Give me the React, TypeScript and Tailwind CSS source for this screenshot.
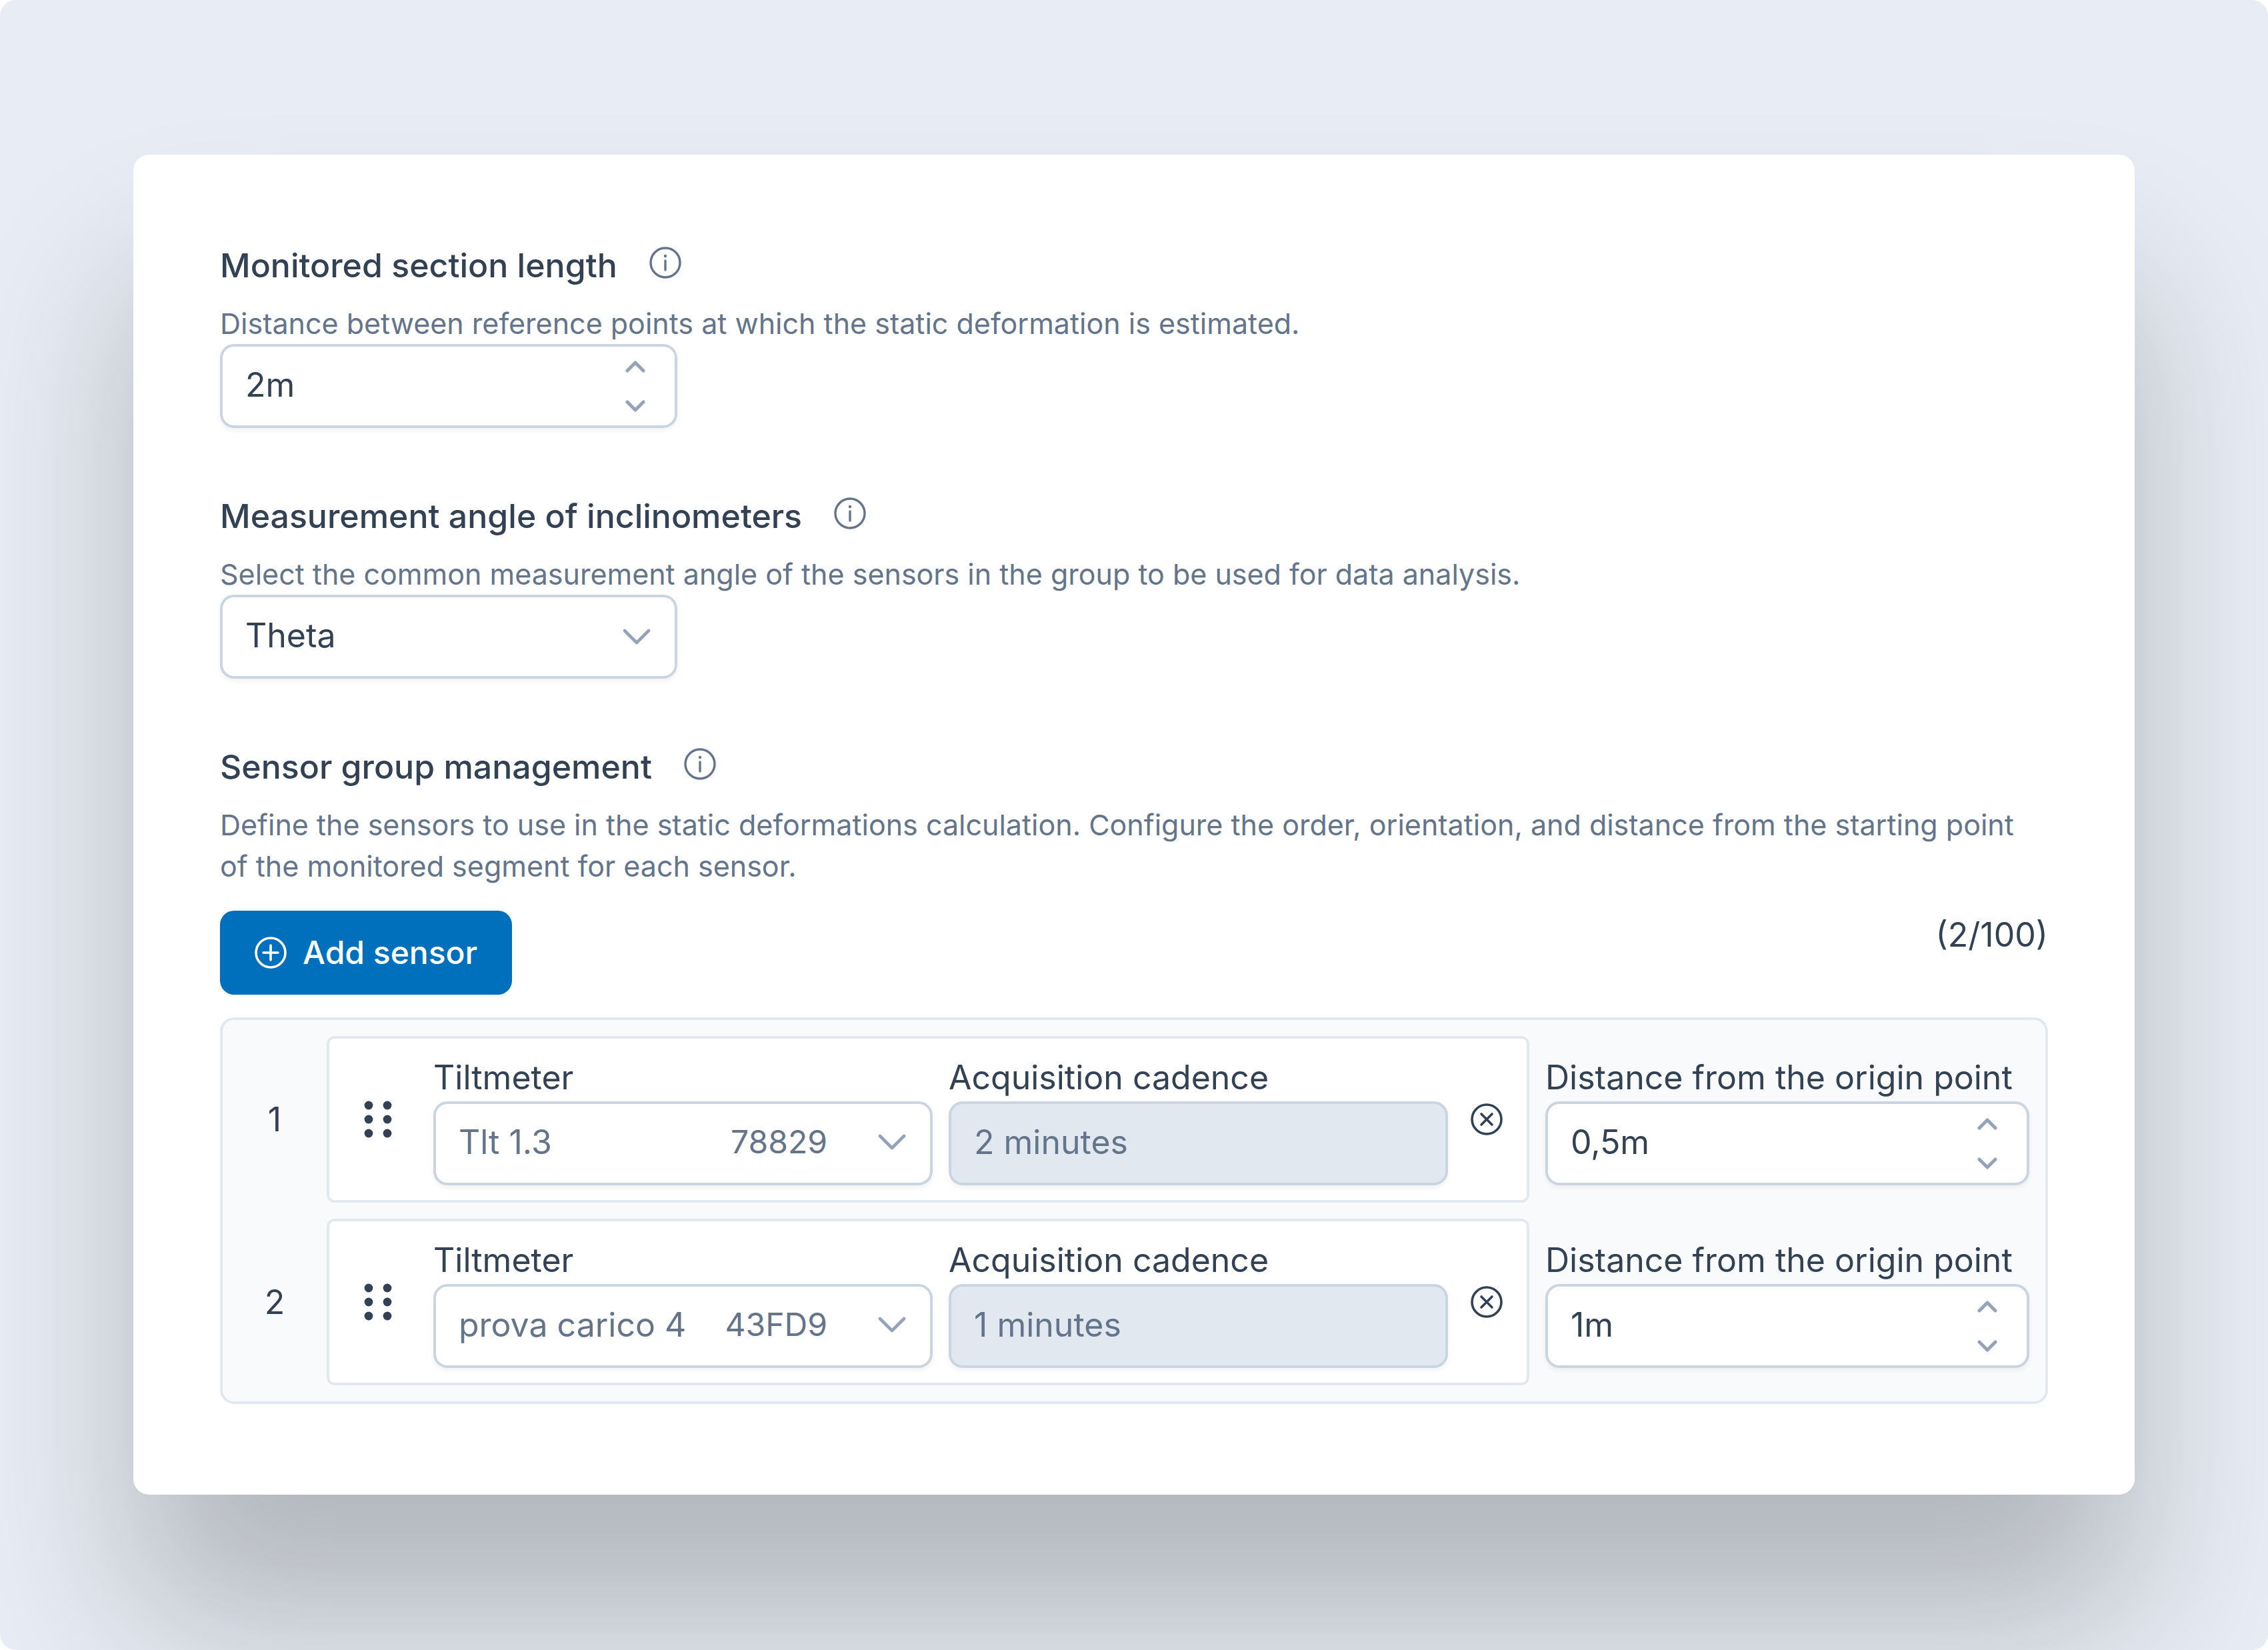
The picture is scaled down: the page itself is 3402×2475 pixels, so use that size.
import { useId, useState, type ReactNode } from "react";

type Sensor = {
  id: number;
  name: string;
  code: string;
  cadence: string;
  distance: string;
};

const SENSORS: Sensor[] = [
  { id: 1, name: "Tlt 1.3", code: "78829", cadence: "2 minutes", distance: "0,5m" },
  { id: 2, name: "prova carico 4", code: "43FD9", cadence: "1 minutes", distance: "1m" },
];

const MAX_SENSORS = 100;

const fieldClass =
  "h-[126px] w-full appearance-none rounded-[21px] border-4 border-[#cbd5e1] px-[34px] pb-1 shadow-[0_4px_7px_rgba(18,18,23,0.05)] outline-none";

const InfoIcon = () => (
  <svg viewBox="0 0 48 48" className="size-12" fill="none" stroke="currentColor" aria-hidden="true">
    <circle cx="24" cy="24" r="22" strokeWidth="3.4" />
    <path d="M24 21v14" strokeWidth="3.4" strokeLinecap="round" />
    <circle cx="24" cy="14" r="2.2" fill="currentColor" stroke="none" />
  </svg>
);

const PlusCircleIcon = () => (
  <svg
    viewBox="0 0 48 48"
    className="size-12"
    fill="none"
    stroke="currentColor"
    strokeWidth="3.6"
    strokeLinecap="round"
    aria-hidden="true"
  >
    <circle cx="24" cy="24" r="22" />
    <path d="M24 13v22M13 24h22" />
  </svg>
);

const CloseCircleIcon = () => (
  <svg
    viewBox="0 0 48 48"
    className="size-12"
    fill="none"
    stroke="currentColor"
    strokeWidth="3.6"
    strokeLinecap="round"
    aria-hidden="true"
  >
    <circle cx="24" cy="24" r="22" />
    <path d="M16 16l16 16M32 16l-16 16" />
  </svg>
);

const DotsIcon = () => (
  <svg viewBox="0 0 42 56" className="h-14 w-[42px]" fill="currentColor" aria-hidden="true">
    {[7, 28, 49].map((y) => (
      <g key={y}>
        <circle cx="7" cy={y} r="6.4" />
        <circle cx="35" cy={y} r="6.4" />
      </g>
    ))}
  </svg>
);

const ChevronDown = () => (
  <svg
    viewBox="0 0 42 24"
    className="h-6 w-[42px] text-[#94a3b8]"
    fill="none"
    stroke="currentColor"
    strokeWidth="4.6"
    strokeLinecap="round"
    strokeLinejoin="round"
    aria-hidden="true"
  >
    <path d="M3 3l18 18L39 3" />
  </svg>
);

const StepIcon = ({ d }: { d: string }) => (
  <svg
    viewBox="0 0 30 18"
    className="h-[18px] w-[30px]"
    fill="none"
    stroke="currentColor"
    strokeWidth="5"
    strokeLinecap="round"
    strokeLinejoin="round"
    aria-hidden="true"
  >
    <path d={d} />
  </svg>
);

const NumberField = ({ id, value }: { id: string; value: string }) => {
  const [text, setText] = useState(value);

  const step = (delta: number) => {
    const next = Math.max(0, parseFloat(text.replace(",", ".")) + delta);
    setText(`${String(next).replace(".", ",")}m`);
  };

  return (
    <div className="relative">
      <input
        id={id}
        type="text"
        inputMode="decimal"
        value={text}
        onChange={(e) => setText(e.target.value)}
        className={`${fieldClass} bg-white text-[#334155]`}
      />
      <div className="absolute inset-y-0 right-[34px] flex w-[58px] flex-col py-1 text-[#94a3b8]">
        <button
          type="button"
          aria-label="Increase"
          onClick={() => step(0.5)}
          className="flex flex-1 items-center justify-center"
        >
          <StepIcon d="M3 15L15 3l12 12" />
        </button>
        <button
          type="button"
          aria-label="Decrease"
          onClick={() => step(-0.5)}
          className="flex flex-1 items-center justify-center"
        >
          <StepIcon d="M3 3l12 12L27 3" />
        </button>
      </div>
    </div>
  );
};

type SectionProps = {
  title: string;
  description: string;
  htmlFor?: string;
  children: ReactNode;
};

const Section = ({ title, description, htmlFor, children }: SectionProps) => (
  <section>
    <div className="flex h-[72px] items-start gap-12 font-medium">
      {htmlFor ? <label htmlFor={htmlFor}>{title}</label> : <h2>{title}</h2>}
      <button type="button" aria-label={`About ${title}`} className="mt-2 text-[#64748b]">
        <InfoIcon />
      </button>
    </div>
    <p className="mt-5 text-[43px]/[62px] text-[#64748b]">{description}</p>
    {children}
  </section>
);

const SensorRow = ({ sensor, index }: { sensor: Sensor; index: number }) => {
  const uid = useId();

  return (
    <li className="flex items-center gap-6">
      <span className="w-[108px] text-center">{index}</span>
      <div className="flex flex-1 items-center rounded-xl border-4 border-[#e2e8f0] bg-white py-[22px] pr-9 pl-[52px]">
        <button type="button" aria-label={`Move sensor ${index}`} className="mr-[62px] cursor-grab">
          <DotsIcon />
        </button>
        <div className="grid flex-1 grid-cols-2 gap-6">
          <div>
            <label htmlFor={`${uid}-tilt`} className="block">
              Tiltmeter
            </label>
            <div className="relative text-[#64748b]">
              <select
                id={`${uid}-tilt`}
                defaultValue={sensor.name}
                className={`${fieldClass} bg-white`}
              >
                {SENSORS.map((s) => (
                  <option key={s.id}>{s.name}</option>
                ))}
              </select>
              <div className="pointer-events-none absolute inset-y-0 right-10 flex items-center gap-[76px] pb-1">
                <span className="text-5xl">{sensor.code}</span>
                <ChevronDown />
              </div>
            </div>
          </div>
          <div>
            <label htmlFor={`${uid}-cadence`} className="block">
              Acquisition cadence
            </label>
            <input
              id={`${uid}-cadence`}
              type="text"
              disabled
              value={sensor.cadence}
              className={`${fieldClass} bg-[#e2e8f0] text-[#64748b]`}
            />
          </div>
        </div>
        <button type="button" aria-label={`Remove sensor ${index}`} className="ml-[34px]">
          <CloseCircleIcon />
        </button>
      </div>
      <div className="w-[726px]">
        <label htmlFor={`${uid}-distance`} className="block whitespace-nowrap">
          Distance from the origin point
        </label>
        <NumberField id={`${uid}-distance`} value={sensor.distance} />
      </div>
    </li>
  );
};

export default function App() {
  return (
    <div className="min-h-screen bg-white font-[Inter,sans-serif] text-[50px]/[72px] text-[#334155]">
      <div className="min-h-screen overflow-hidden rounded-3xl bg-[#e8edf5] px-[200px] py-[232px]">
        <main className="flex flex-col gap-24 rounded-3xl bg-white px-[130px] pt-[130px] pb-[136px] shadow-[0_190px_250px_rgba(0,0,0,0.23)]">
          <Section
            title="Monitored section length"
            description="Distance between reference points at which the static deformation is estimated."
            htmlFor="section-length"
          >
            <div className="w-[686px]">
              <NumberField id="section-length" value="2m" />
            </div>
          </Section>

          <Section
            title="Measurement angle of inclinometers"
            description="Select the common measurement angle of the sensors in the group to be used for data analysis."
            htmlFor="angle"
          >
            <div className="relative w-[686px]">
              <select id="angle" defaultValue="Theta" className={`${fieldClass} bg-white`}>
                <option>Theta</option>
                <option>Phi</option>
              </select>
              <div className="pointer-events-none absolute inset-y-0 right-10 flex items-center">
                <ChevronDown />
              </div>
            </div>
          </Section>

          <Section
            title="Sensor group management"
            description="Define the sensors to use in the static deformations calculation. Configure the order, orientation, and distance from the starting point of the monitored segment for each sensor."
          >
            <div className="mt-9 flex items-start justify-between">
              <button
                type="button"
                className="flex h-[126px] items-center gap-6 rounded-[21px] bg-[#0070bd] px-[52px] text-5xl font-medium text-white"
              >
                <PlusCircleIcon />
                Add sensor
              </button>
              <span>
                ({SENSORS.length}/{MAX_SENSORS})
              </span>
            </div>
            <ol className="mt-[34px] flex flex-col gap-6 rounded-[21px] border-4 border-[#e2e8f0] bg-[#f8fafc] p-6">
              {SENSORS.map((sensor, i) => (
                <SensorRow key={sensor.id} sensor={sensor} index={i + 1} />
              ))}
            </ol>
          </Section>
        </main>
      </div>
    </div>
  );
}
